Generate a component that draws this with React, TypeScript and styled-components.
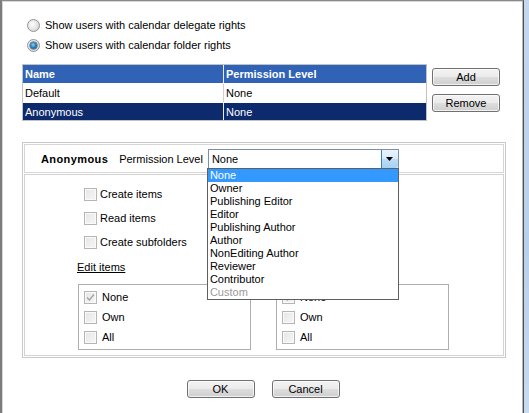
import React from 'react';
import styled, { createGlobalStyle } from 'styled-components';

const Global = createGlobalStyle`
  html, body { margin: 0; padding: 0; background: #fff; }
  body {
    width: 529px; height: 413px; overflow: hidden;
    font-family: "Liberation Sans", Arial, sans-serif;
    font-size: 11px; color: #000;
  }
  * { box-sizing: border-box; }
`;

const Window = styled.div`
  display: flex;
  width: 529px;
  height: 413px;
`;

const Dialog = styled.div`
  width: 524px;
  height: 413px;
  background: #fff;
  border-left: 2px solid #7c7c7c;
  border-top: 1px solid #8a8a8a;
  border-right: 1px solid #505050;
  box-shadow: inset -1px 0 0 #b8b8b8, inset 1px 1px 0 #d8d8d8;
  display: flex;
  flex-direction: column;
  align-items: flex-start;
  padding: 14px 19px 0 20px;
`;

const Frame = styled.div`
  width: 5px;
  height: 413px;
  background: linear-gradient(180deg, #c4d8ee 0%, #b9d0ea 60%, #c8dbef 100%);
`;

const RadioRow = styled.label`
  display: flex;
  align-items: center;
  height: 20px;
  margin-left: 5px;
  gap: 5px;
`;

const Radio = styled.span<{ $checked?: boolean }>`
  position: relative;
  width: 13px;
  height: 13px;
  border-radius: 50%;
  border: 1px solid #939393;
  background: radial-gradient(circle at 40% 40%, #ffffff 0%, #e8e8e8 45%, #c9c9c9 100%);
  flex: none;
  &::after {
    content: '';
    display: ${(p) => (p.$checked ? 'block' : 'none')};
    position: absolute;
    left: 2px;
    top: 2px;
    width: 7px;
    height: 7px;
    border-radius: 50%;
    background: radial-gradient(circle at 45% 40%, #8fd2f5 0%, #2c83b8 45%, #1a4d74 100%);
    box-shadow: 0 0 0 0.5px #1d4a6e;
  }
`;

const TableRow = styled.div`
  display: flex;
  margin-top: 9px;
`;

const Table = styled.div`
  width: 405px;
  border: 1px solid #c2c2c2;
  display: flex;
  flex-direction: column;
  background: #fff;
`;

const Row = styled.div<{ $kind: 'head' | 'plain' | 'sel'; $h: number }>`
  display: flex;
  height: ${(p) => p.$h}px;
  background: ${(p) => (p.$kind === 'head' ? '#3063b6' : p.$kind === 'sel' ? '#0c2a6c' : '#fff')};
  color: ${(p) => (p.$kind === 'plain' ? '#000' : '#fff')};
  font-weight: ${(p) => (p.$kind === 'head' ? 'bold' : 'normal')};
  border-bottom: ${(p) => (p.$kind === 'sel' ? 'none' : '1px solid #ffffff')};
`;

const Cell = styled.div<{ $w?: number; $sep?: boolean; $light?: boolean }>`
  width: ${(p) => (p.$w ? `${p.$w}px` : 'auto')};
  flex: ${(p) => (p.$w ? 'none' : '1')};
  display: flex;
  align-items: center;
  padding-left: 2px;
  border-left: ${(p) => (p.$sep ? `1px solid ${p.$light ? '#d0d0d0' : '#e8ecf4'}` : 'none')};
`;

const SideButtons = styled.div`
  display: flex;
  flex-direction: column;
  gap: 8px;
  margin-left: 5px;
  margin-top: 4px;
`;

const Button = styled.button`
  width: 68px;
  height: 18px;
  padding: 0;
  border: 1px solid #707070;
  border-radius: 3px;
  background: linear-gradient(180deg, #f3f3f3 0%, #ebebeb 48%, #dddddd 52%, #cfcfcf 100%);
  box-shadow: inset 0 0 0 1px rgba(255, 255, 255, 0.7);
  font-family: "Liberation Sans", Arial, sans-serif;
  font-size: 11px;
  color: #000;
  line-height: 16px;
`;

const Panel = styled.div`
  width: 484px;
  height: 216px;
  margin-top: 21px;
  border: 1px solid #c9c9c9;
  padding: 1px;
  display: flex;
  flex-direction: column;
  gap: 1px;
`;

const PanelHeader = styled.div`
  height: 29px;
  border: 1px solid #d6d6d6;
  display: flex;
  align-items: center;
  padding-left: 16px;
`;

const UserName = styled.span`
  font-weight: bold;
  font-size: 11px;
  letter-spacing: 0.4px;
  margin-right: 11px;
`;

const LevelLabel = styled.span`
  margin-right: 5px;
`;

const Select = styled.div`
  position: relative;
  width: 191px;
  height: 20px;
  border: 1px solid #7d8fa3;
  display: flex;
  align-items: center;
  padding-left: 3px;
  background: #fff;
`;

const SelectValue = styled.span`
  flex: 1;
`;

const ArrowButton = styled.span`
  width: 17px;
  height: 18px;
  border-left: 1px solid #3c7fb1;
  border-radius: 0 2px 2px 0;
  background: linear-gradient(180deg, #e8f4fd 0%, #d7ebfb 48%, #bcdcf6 52%, #a7d0f2 100%);
  display: flex;
  align-items: center;
  justify-content: center;
`;

const DropList = styled.div`
  position: absolute;
  top: 18px;
  left: -2px;
  width: 192px;
  border: 1px solid #5f5f5f;
  background: #fff;
  z-index: 5;
  padding: 0;
`;

const DropItem = styled.div<{ $active?: boolean; $disabled?: boolean }>`
  height: 13px;
  line-height: 13px;
  padding-left: 2px;
  background: ${(p) => (p.$active ? '#3399ff' : 'transparent')};
  color: ${(p) => (p.$active ? '#fff' : p.$disabled ? '#9a9a9a' : '#000')};
  white-space: nowrap;
`;

const PanelBody = styled.div`
  flex: 1;
  border: 1px solid #d3d3d3;
  display: flex;
  gap: 24px;
  padding: 7px 0 0 52px;
`;

const Column = styled.div`
  width: 174px;
  display: flex;
  flex-direction: column;
`;

const CheckRow = styled.div<{ $h: number; $gap: number; $indent: number }>`
  display: flex;
  align-items: center;
  height: ${(p) => p.$h}px;
  gap: ${(p) => p.$gap}px;
  margin-left: ${(p) => p.$indent}px;
`;

const Box = styled.span`
  width: 13px;
  height: 13px;
  flex: none;
  border: 1px solid #b5b5b5;
  background: linear-gradient(135deg, #e6e6e6 0%, #f6f6f6 100%);
  box-shadow: inset 0 0 0 1px #fafafa;
  display: flex;
  align-items: center;
  justify-content: center;
`;

const LinkLabel = styled.span`
  margin-top: 6px;
  height: 14px;
  line-height: 14px;
  text-decoration: underline;
`;

const Group = styled.div`
  width: 173px;
  height: 66px;
  margin-top: 10px;
  margin-left: 1px;
  border: 1px solid #aeaeae;
  padding: 2px 0 0 5px;
  display: flex;
  flex-direction: column;
`;

const BottomButtons = styled.div`
  align-self: stretch;
  display: flex;
  justify-content: center;
  gap: 17px;
  margin-top: 22px;
`;

const levels = [
  'None',
  'Owner',
  'Publishing Editor',
  'Editor',
  'Publishing Author',
  'Author',
  'NonEditing Author',
  'Reviewer',
  'Contributor',
  'Custom',
];

function Check({ checked }: { checked?: boolean }) {
  return (
    <Box>
      {checked && (
        <svg width="9" height="9" viewBox="0 0 9 9">
          <path d="M1 4.6 L3.4 7 L8 1.5" fill="none" stroke="#a3a3a3" strokeWidth="1.4" />
        </svg>
      )}
    </Box>
  );
}

function Options({ labels }: { labels: string[] }) {
  return (
    <>
      {labels.map((l) => (
        <CheckRow key={l} $h={24} $gap={3} $indent={7}>
          <Check />
          <span>{l}</span>
        </CheckRow>
      ))}
    </>
  );
}

function ItemGroup({ title }: { title: string }) {
  return (
    <>
      <LinkLabel>{title}</LinkLabel>
      <Group>
        <CheckRow $h={20} $gap={5} $indent={0}>
          <Check checked />
          <span>None</span>
        </CheckRow>
        <CheckRow $h={20} $gap={5} $indent={0}>
          <Check />
          <span>Own</span>
        </CheckRow>
        <CheckRow $h={20} $gap={5} $indent={0}>
          <Check />
          <span>All</span>
        </CheckRow>
      </Group>
    </>
  );
}

export default function App() {
  return (
    <>
      <Global />
      <Window>
        <Dialog>
          <RadioRow>
            <Radio />
            <span>Show users with calendar delegate rights</span>
          </RadioRow>
          <RadioRow>
            <Radio $checked />
            <span>Show users with calendar folder rights</span>
          </RadioRow>

          <TableRow>
            <Table>
              <Row $kind="head" $h={19}>
                <Cell $w={200}>Name</Cell>
                <Cell $sep>Permission Level</Cell>
              </Row>
              <Row $kind="plain" $h={19}>
                <Cell $w={200}>Default</Cell>
                <Cell $sep $light>None</Cell>
              </Row>
              <Row $kind="sel" $h={17}>
                <Cell $w={200}>Anonymous</Cell>
                <Cell $sep>None</Cell>
              </Row>
            </Table>
            <SideButtons>
              <Button>Add</Button>
              <Button>Remove</Button>
            </SideButtons>
          </TableRow>

          <Panel>
            <PanelHeader>
              <UserName>Anonymous</UserName>
              <LevelLabel>Permission Level</LevelLabel>
              <Select>
                <SelectValue>None</SelectValue>
                <ArrowButton>
                  <svg width="7" height="4" viewBox="0 0 7 4">
                    <path d="M0 0 H7 L3.5 4 Z" fill="#000" />
                  </svg>
                </ArrowButton>
                <DropList>
                  {levels.map((l, i) => (
                    <DropItem key={l} $active={i === 0} $disabled={l === 'Custom'}>
                      {l}
                    </DropItem>
                  ))}
                </DropList>
              </Select>
            </PanelHeader>
            <PanelBody>
              <Column>
                <Options labels={['Create items', 'Read items', 'Create subfolders']} />
                <ItemGroup title="Edit items" />
              </Column>
              <Column>
                <Options labels={['Folder owner', 'Folder contact', 'Folder visible']} />
                <ItemGroup title="Delete items" />
              </Column>
            </PanelBody>
          </Panel>

          <BottomButtons>
            <Button>OK</Button>
            <Button>Cancel</Button>
          </BottomButtons>
        </Dialog>
        <Frame />
      </Window>
    </>
  );
}
